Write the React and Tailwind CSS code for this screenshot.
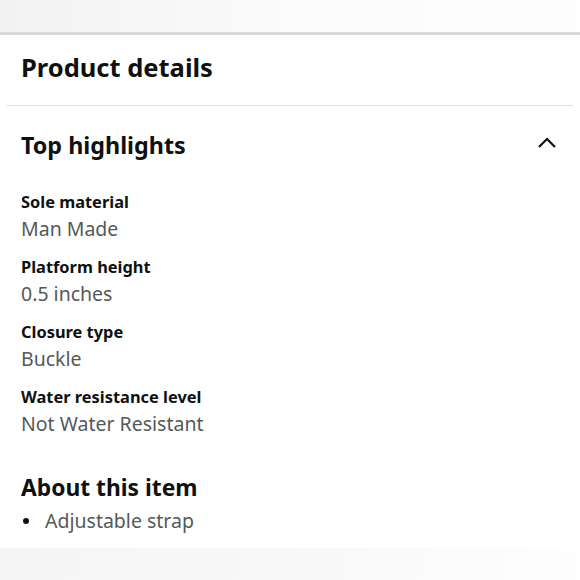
import React from "react";

const items = [
  ["Sole material", "Man Made"],
  ["Platform height", "0.5 inches"],
  ["Closure type", "Buckle"],
  ["Water resistance level", "Not Water Resistant"],
];

export default function App() {
  return (
    <div className="w-[580px] h-[580px] bg-white overflow-hidden text-[#0f1111]" style={{ fontFamily: '"Noto Sans", Arial, sans-serif' }}>
      <div className="h-[32px] bg-gradient-to-r from-[#f2f2f2] via-[#fbfbfb] to-[#fefefe]" />
      <div className="h-[3px] bg-[#d5d9d9]" />
      <div className="px-[21px] pt-[16px] pb-[22px]">
        <h2 className="text-[25.5px] leading-[32px] font-bold">Product details</h2>
      </div>
      <div className="mx-[7px] h-px bg-[#dddddd]" />
      <div className="px-[21px] pt-[23px]">
        <div className="flex items-center justify-between">
          <h3 className="text-[23.3px] leading-[32px] font-bold">Top highlights</h3>
          <svg width="20" height="14" viewBox="0 0 20 14" className="mr-[2px] -mt-[4px]">
            <path d="M2 11 L10 3 L18 11" fill="none" stroke="#0f1111" strokeWidth="2.2" />
          </svg>
        </div>
        <div className="mt-[29px] flex flex-col gap-[11px]">
          {items.map(([k, v]) => (
            <div key={k}>
              <div className="text-[16.4px] leading-[24px] font-bold">{k}</div>
              <div className="text-[19.5px] leading-[30px] text-[#565959]">{v}</div>
            </div>
          ))}
        </div>
        <h3 className="mt-[33px] text-[22.8px] leading-[32px] font-bold">About this item</h3>
        <ul className="mt-[4px]">
          <li className="flex items-center text-[19.5px] leading-[26px] text-[#565959]">
            <span className="w-[6px] h-[6px] rounded-full bg-[#0f1111] ml-[2px] mr-[16px]" />
            Adjustable strap
          </li>
        </ul>
      </div>
      <div className="mt-[14px] h-[40px] bg-gradient-to-r from-[#f5f5f5] via-[#f8f8f8] to-[#fefefe]" />
    </div>
  );
}
